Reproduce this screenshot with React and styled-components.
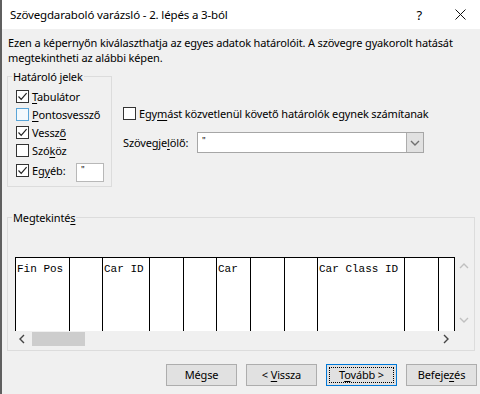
import React from "react";
import styled, { createGlobalStyle } from "styled-components";

const GlobalStyle = createGlobalStyle`
  html, body {
    margin: 0;
    background: #f0f0f0;
  }
  body {
    font-family: "Segoe UI", "Noto Sans", sans-serif;
    font-size: 11px;
    letter-spacing: -0.15px;
    color: #000;
  }
`;

// "&" marks the access key, like in the Windows resource files
const mnemonic = (text) => {
  const i = text.indexOf("&");
  if (i < 0) return text;
  return (
    <>
      {text.slice(0, i)}
      <Key>{text[i + 1]}</Key>
      {text.slice(i + 2)}
    </>
  );
};

const delimiters = [
  { label: "&Tabulátor", checked: true },
  { label: "&Pontosvessző", checked: false, hover: true },
  { label: "Vessz&ő", checked: true },
  { label: "Szó&köz", checked: false },
];

const columns = [
  { width: 54, text: "Fin Pos" },
  { width: 33 },
  { width: 47, text: "Car ID" },
  { width: 34 },
  { width: 33 },
  { width: 34, text: "Car" },
  { width: 34 },
  { width: 33 },
  { width: 87, text: "Car Class ID" },
  { width: 34 },
  { width: 16, last: true },
];

const buttons = [
  { label: "Mégse" },
  { label: "< &Vissza" },
  { label: "T&ovább >", focused: true },
  { label: "Befeje&zés" },
];

const Check = () => (
  <svg width="11" height="11" viewBox="0 0 11 11">
    <polyline points="1.5,5.5 4.2,8.3 9.6,2.2" fill="none" stroke="#222" strokeWidth="1.2" />
  </svg>
);

const Chevron = ({ dir, color = "#606060" }) => {
  const pts = {
    up: "1,6 5,2 9,6",
    down: "1,3 5,7 9,3",
    left: "6,1 2,5 6,9",
    right: "3,1 7,5 3,9",
  }[dir];
  return (
    <svg width="10" height="10" viewBox="0 0 10 10">
      <polyline points={pts} fill="none" stroke={color} strokeWidth="1.4" />
    </svg>
  );
};

function CheckBox({ checked, hover }) {
  return <Box $hover={hover}>{checked && <Check />}</Box>;
}

export default function App() {
  return (
    <>
      <GlobalStyle />
      <Window>
        <TitleBar>
          <Title>Szövegdaraboló varázsló - 2. lépés a 3-ból</Title>
          <Caption>
            <HelpGlyph>?</HelpGlyph>
            <svg width="11" height="11" viewBox="0 0 11 11">
              <path d="M0.5 0.5 L10.5 10.5 M10.5 0.5 L0.5 10.5" stroke="#111" strokeWidth="1" />
            </svg>
          </Caption>
        </TitleBar>

        <Content>
          <Description>
            Ezen a képernyőn kiválaszthatja az egyes adatok határolóit. A szövegre gyakorolt hatását
            <br />
            megtekintheti az alábbi képen.
          </Description>

          <TopRow>
            <Group $width={105} $height={118}>
              <Legend>Határoló jelek</Legend>
              <DelimiterList>
                {delimiters.map((d) => (
                  <CheckRow key={d.label}>
                    <CheckBox checked={d.checked} hover={d.hover} />
                    <span>{mnemonic(d.label)}</span>
                  </CheckRow>
                ))}
                <OtherRow>
                  <CheckBox checked />
                  <OtherLabel>{mnemonic("Eg&yéb:")}</OtherLabel>
                  <OtherInput>"</OtherInput>
                </OtherRow>
              </DelimiterList>
            </Group>

            <Options>
              <CheckRow>
                <CheckBox />
                <span>{mnemonic("Egy&mást közvetlenül követő határolók egynek számítanak")}</span>
              </CheckRow>
              <ComboRow>
                <ComboLabel>{mnemonic("Szövegje&lölő:")}</ComboLabel>
                <Combo>
                  <ComboValue>"</ComboValue>
                  <ComboButton>
                    <Chevron dir="down" color="#707070" />
                  </ComboButton>
                </Combo>
              </ComboRow>
            </Options>
          </TopRow>

          <Group $height={141} $top={23}>
            <Legend>{mnemonic("Megtekinté&s")}</Legend>
            <Preview>
              <Table>
                {columns.map((c, i) => (
                  <Column key={i} $width={c.width} $last={c.last}>
                    {c.text}
                  </Column>
                ))}
              </Table>
              <VScroll>
                <Chevron dir="up" color="#c0c0c0" />
                <Chevron dir="down" color="#c0c0c0" />
              </VScroll>
              <HScroll>
                <Chevron dir="left" color="#444" />
                <Thumb />
                <Chevron dir="right" color="#444" />
              </HScroll>
            </Preview>
          </Group>

          <ButtonRow>
            {buttons.map((b) => (
              <Button key={b.label} $focused={b.focused}>
                <FocusRect $focused={b.focused}>{mnemonic(b.label)}</FocusRect>
              </Button>
            ))}
          </ButtonRow>
        </Content>
      </Window>
    </>
  );
}

const Window = styled.div`
  width: 480px;
  height: 394px;
  box-sizing: border-box;
  border-left: 2px solid #5f5f5f;
  display: flex;
  flex-direction: column;
  overflow: hidden;
`;

const TitleBar = styled.div`
  height: 29px;
  flex-shrink: 0;
  background: #fff;
  display: flex;
  align-items: center;
  justify-content: space-between;
  padding-left: 8px;
`;

const Title = styled.div`
  font-size: 11.5px;
`;

const Caption = styled.div`
  display: flex;
  align-items: center;
  gap: 33px;
  padding-right: 14px;
`;

const HelpGlyph = styled.span`
  font-size: 13px;
`;

const Content = styled.div`
  flex: 1;
  padding: 0 5px;
  display: flex;
  flex-direction: column;
`;

const Description = styled.p`
  margin: 6px 0 0 1px;
  line-height: 15px;
  white-space: nowrap;
`;

const Key = styled.u`
  text-underline-offset: 2px;
`;

const TopRow = styled.div`
  display: flex;
  margin-top: 4px;
`;

const Group = styled.fieldset`
  box-sizing: border-box;
  margin: ${(p) => p.$top || 0}px 0 0;
  padding: 0;
  width: ${(p) => (p.$width ? `${p.$width}px` : "auto")};
  height: ${(p) => p.$height}px;
  border: 1px solid #dcdcdc;
  min-width: 0;
`;

const Legend = styled.legend`
  margin-left: 4px;
  padding: 0 1px;
  line-height: 15px;
`;

const DelimiterList = styled.div`
  padding: 3px 0 0 8px;
  display: flex;
  flex-direction: column;
`;

const CheckRow = styled.div`
  height: 18px;
  display: flex;
  align-items: center;
  gap: 3px;
  white-space: nowrap;
`;

const OtherRow = styled(CheckRow)`
  height: 20px;
  margin-top: 1px;
`;

const OtherLabel = styled.span`
  width: 41px;
`;

const OtherInput = styled.div`
  box-sizing: border-box;
  width: 28px;
  height: 19px;
  margin-top: 3px;
  align-self: flex-start;
  background: #fff;
  border: 1px solid #b8b8b8;
  padding-left: 4px;
  font-size: 9px;
  line-height: 12px;
`;

const Box = styled.span`
  box-sizing: border-box;
  width: 13px;
  height: 13px;
  flex-shrink: 0;
  display: inline-flex;
  align-items: center;
  justify-content: center;
  background: ${(p) => (p.$hover ? "#f3f9fd" : "#fff")};
  border: 1px solid ${(p) => (p.$hover ? "#5aa5d8" : "#333")};
`;

const Options = styled.div`
  margin-left: 11px;
  padding-top: 35px;
  display: flex;
  flex-direction: column;
  gap: 10px;
`;

const ComboRow = styled.div`
  display: flex;
  align-items: center;
`;

const ComboLabel = styled.span`
  width: 74px;
`;

const Combo = styled.div`
  box-sizing: border-box;
  width: 227px;
  height: 21px;
  display: flex;
  background: #fff;
  border: 1px solid #a6a6a6;
`;

const ComboValue = styled.span`
  flex: 1;
  padding: 1px 0 0 4px;
  font-size: 9px;
`;

const ComboButton = styled.span`
  box-sizing: border-box;
  width: 17px;
  display: flex;
  align-items: center;
  justify-content: center;
  background: #e1e1e1;
  border-left: 1px solid #adadad;
`;

const Preview = styled.div`
  margin: 32px 0 0 7px;
  display: grid;
  grid-template-columns: 440px 17px;
  grid-template-rows: 74px 16px;
`;

const Table = styled.div`
  display: flex;
  background: #fff;
  border-top: 1px solid #000;
  overflow: hidden;
`;

const Column = styled.div`
  box-sizing: border-box;
  flex: 0 0 ${(p) => p.$width + (p.$last ? 1 : 0)}px;
  border-left: 1px solid #000;
  border-right: ${(p) => (p.$last ? "1px solid #000" : "none")};
  padding: 5px 0 0 1px;
  font-family: "Liberation Mono", "Courier New", monospace;
  font-size: 11px;
  letter-spacing: 0;
  line-height: 12px;
  white-space: pre;
`;

const VScroll = styled.div`
  display: flex;
  flex-direction: column;
  align-items: center;
  justify-content: space-between;
  padding: 5px 0 6px;
`;

const HScroll = styled.div`
  display: flex;
  align-items: center;
  padding: 0 4px 0 3px;
  gap: 4px;
  & > svg:last-child {
    margin-left: auto;
  }
`;

const Thumb = styled.div`
  width: 53px;
  height: 14px;
  background: #cdcdcd;
`;

const ButtonRow = styled.div`
  display: flex;
  justify-content: flex-end;
  gap: 9px;
  margin: 13px -2px 0 0;
`;

const Button = styled.div`
  box-sizing: border-box;
  width: 71px;
  height: 22px;
  padding: 2px;
  display: flex;
  background: #e1e1e1;
  border: 1px solid ${(p) => (p.$focused ? "#0078d7" : "#adadad")};
`;

const FocusRect = styled.span`
  flex: 1;
  text-align: center;
  line-height: 14px;
  white-space: pre;
  border: 1px dotted ${(p) => (p.$focused ? "#000" : "transparent")};
`;
